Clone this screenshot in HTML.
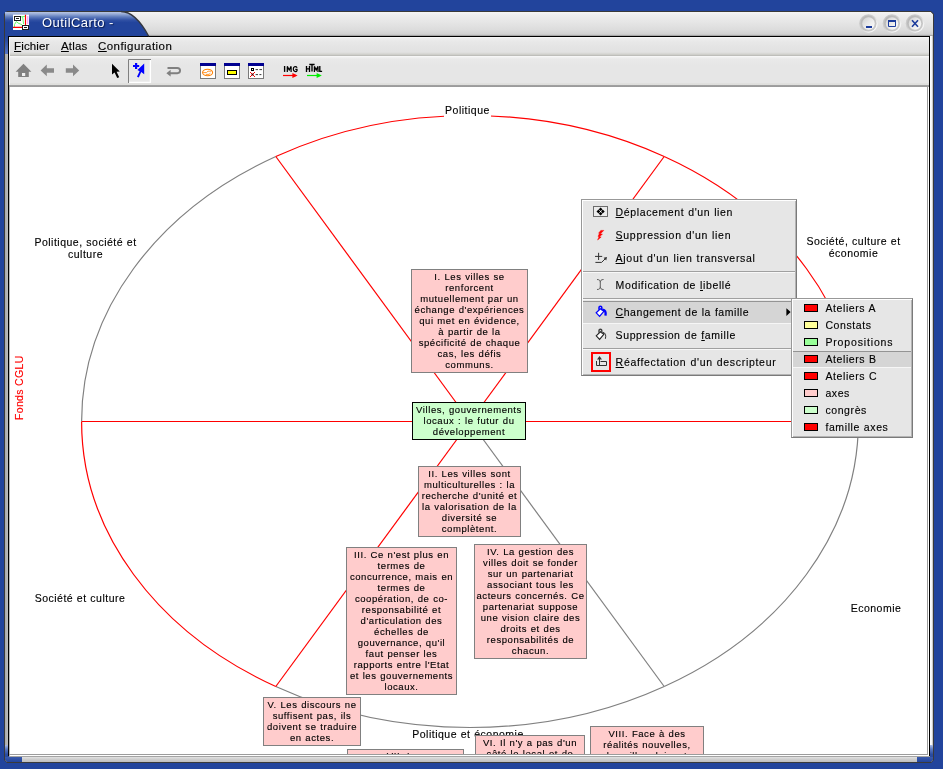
<!DOCTYPE html>
<html>
<head>
<meta charset="utf-8">
<title>OutilCarto</title>
<style>
*{box-sizing:border-box;margin:0;padding:0}
html,body{width:943px;height:769px;overflow:hidden}
body{background:#22449c;font-family:"Liberation Sans",sans-serif;position:relative;color:#000}
.abs{position:absolute}
.bx,.lb,.mi,.si,#menubar span{-webkit-text-stroke:.13px}
/* window frame */
#win{position:absolute;left:4px;top:11px;width:930px;height:752px;background:#3a3a3a;
 clip-path:polygon(3px 0,927px 0,930px 3px,930px 749px,927px 752px,3px 752px,0 749px,0 3px)}
#wininner{position:absolute;left:1px;top:1px;width:928px;height:750px;background:#e4e4e4;
 clip-path:polygon(2.5px 0,925.5px 0,928px 2.5px,928px 747.5px,925.5px 750px,2.5px 750px,0 747.5px,0 2.5px)}
#titlebar{position:absolute;left:0;top:0;width:928px;height:24px;background:linear-gradient(#f6f6f6 0,#eeeeee 3px,#e6e6e6 10px,#dcdcdc 18px,#d2d2d2 22px,#c4c4c4 23px,#8a8a8a 24px)}
#lband{position:absolute;left:0;top:24px;width:4px;height:726px;background:linear-gradient(90deg,#a8a8a8,#c6c6c6)}
#rband{position:absolute;left:925px;top:24px;width:3px;height:726px;background:linear-gradient(90deg,#ffffff 0,#fcfcfc 45%,#b4b4b4 100%)}
#bband{position:absolute;left:0;top:744px;width:928px;height:6px;background:linear-gradient(#a4a4a4 0,#a4a4a4 1px,#e2e2e2 1px,#d0d0d0 3px,#bebebe 6px)}
#black{position:absolute;left:3px;top:24px;width:922px;height:720px;background:#000}
#menubar{position:absolute;left:9px;top:37px;width:920px;height:19px;background:linear-gradient(#fbfbfb 0,#f0f0f0 1px,#e9e9e9 4px,#e5e5e5 9px,#e2e2e2 15px,#dcdcda 16px,#cfcfcb 17.5px,#b6b6b2 19px);box-shadow:inset 1px 0 0 #f8f8f8}
#menubar span{position:absolute;top:2px;font-size:11.5px;line-height:15px;white-space:pre;letter-spacing:.15px}
#toolbar{position:absolute;left:9px;top:56px;width:920px;height:31px;background:linear-gradient(#fafafa 0,#f2f2f2 1px,#e9e9e9 3px,#e6e6e6 9px,#e6e6e6 26.5px,#e0e0de 27.5px,#dededc 29px,#a2a2a2 29px,#999999 31px)}
#toolbar:before{content:"";position:absolute;left:0;top:0;width:1px;height:29px;background:#f6f6f6}
u{text-decoration:underline;text-decoration-thickness:1px;text-underline-offset:1px}
#canvasbg{position:absolute;left:9px;top:87px;width:920px;height:669px;background:#fff;box-shadow:inset 1px 0 0 #b8b8b8}
#cv{position:absolute;left:0;top:0;width:943px;height:769px;clip-path:inset(87px 16px 15px 10px)}
.bx{position:absolute;background:#ffcccc;border:1px solid #808080;font-size:9.5px;line-height:11px;text-align:center;letter-spacing:.57px;word-spacing:.5px;white-space:pre;overflow:hidden;padding-top:1px}
.lb{position:absolute;font-size:10.5px;line-height:12px;text-align:center;white-space:pre;background:#fff;letter-spacing:.5px;word-spacing:.3px}
.menu{position:absolute;background:#e6e6e6;border:1px solid;border-color:#989898 #7a7a7a #7a7a7a #989898;box-shadow:inset 1px 1px 0 #fff, inset -1px -1px 0 #b4b4b4}
.mi{position:absolute;left:1px;right:1px;height:23px;font-size:10.5px;line-height:22px;white-space:pre;letter-spacing:.7px;word-spacing:.4px}
.mi span{position:absolute;left:32.6px;top:0}
.mi.hl,.si.hl{background:#d5d5d5;box-shadow:inset 0 1px 0 #949494, inset 0 -1px 0 #f6f6f6}
.si{position:absolute;left:1px;right:1px;height:17px;font-size:10.5px;line-height:16px;white-space:pre;letter-spacing:.6px;word-spacing:.4px}
.si span{position:absolute;left:32.4px;top:0}
.si i{position:absolute;left:10.6px;top:4px;width:14px;height:8px;border:1px solid #000;background:#ff0000}
.sep{position:absolute;left:1px;right:1px;height:2px;border-top:1px solid #a0a0a0;border-bottom:1px solid #f8f8f8}
.sw{position:absolute;left:11px;width:15px;height:9px;border:1px solid #000}
</style>
</head>
<body>
<div id="root" style="position:absolute;left:0;top:0;width:943px;height:769px;will-change:transform">
<div id="win"><div id="wininner">
  <div id="titlebar"></div>
  <div id="lband"></div><div id="rband"></div><div id="bband"></div>
  <div class="abs" style="left:0;top:24px;width:4px;height:18px;background:linear-gradient(#22449c 0,#2a4ca2 25%,#5676c6 100%)"></div>
  <div class="abs" style="left:0;top:733px;width:4px;height:17px;background:linear-gradient(#a8bae4 0,#5a78c0 25%,#2a4ca2 55%,#22449c 100%)"></div>
  <div class="abs" style="left:925px;top:733px;width:3px;height:17px;background:linear-gradient(#a8bae4 0,#5a78c0 25%,#2a4ca2 55%,#22449c 100%)"></div>
  <div class="abs" style="left:0;top:745px;width:17px;height:5px;background:linear-gradient(#3a5aac,#22449c)"></div>
  <div class="abs" style="left:912px;top:745px;width:16px;height:5px;background:linear-gradient(#3a5aac,#22449c)"></div>
  <div id="black"></div>
</div></div>


<!-- title bar decorations (page coords) -->
<svg class="abs" style="left:0;top:0" width="943" height="40" viewBox="0 0 943 40">
 <defs>
  <linearGradient id="tabg" x1="0" y1="0" x2="0" y2="1">
   <stop offset="0" stop-color="#b8c6e4"/><stop offset="0.08" stop-color="#9aaed8"/><stop offset="0.2" stop-color="#607dbd"/><stop offset="0.33" stop-color="#3252a5"/><stop offset="0.44" stop-color="#22449c"/><stop offset="1" stop-color="#22449c"/>
  </linearGradient>
  <radialGradient id="ring" cx="0.5" cy="0.5" r="0.5">
   <stop offset="0.62" stop-color="#bcbcbc"/><stop offset="0.8" stop-color="#c8c8c8"/><stop offset="1" stop-color="#dedede"/>
  </radialGradient>
  <linearGradient id="btn" x1="0" y1="0" x2="1" y2="1">
   <stop offset="0" stop-color="#d0d0d0"/><stop offset="0.45" stop-color="#e8e8e8"/><stop offset="1" stop-color="#ffffff"/>
  </linearGradient>
  <linearGradient id="ring2" x1="0" y1="0" x2="1" y2="1"><stop offset="0" stop-color="#b4b4b4"/><stop offset="1" stop-color="#cccccc"/></linearGradient>
  <linearGradient id="ringl" x1="0" y1="0" x2="1" y2="1">
   <stop offset="0" stop-color="#c0c0c0"/><stop offset="0.45" stop-color="#d0d0d0"/><stop offset="0.75" stop-color="#f4f4f4"/><stop offset="1" stop-color="#ffffff"/>
  </linearGradient>
 </defs>
 <path d="M5 12H122C131 11.8 140 20 148.4 36H5Z" fill="url(#tabg)"/>
 <path d="M121 11.5C131 11.5 140 20 148.7 36.2" fill="none" stroke="#33373f" stroke-width="1.3"/>
 <!-- window buttons -->
 <g id="wb">
  <circle cx="868.5" cy="23.5" r="9.3" fill="url(#ringl)"/><circle cx="868.5" cy="23.5" r="8" fill="url(#ring2)"/><circle cx="868.5" cy="23.5" r="6.2" fill="url(#btn)"/>
  <circle cx="892" cy="23.5" r="9.3" fill="url(#ringl)"/><circle cx="892" cy="23.5" r="8" fill="url(#ring2)"/><circle cx="892" cy="23.5" r="6.2" fill="url(#btn)"/>
  <circle cx="915" cy="23.5" r="9.3" fill="url(#ringl)"/><circle cx="915" cy="23.5" r="8" fill="url(#ring2)"/><circle cx="915" cy="23.5" r="6.2" fill="url(#btn)"/>
  <rect x="866" y="26" width="6" height="2" fill="#1c3c9c"/>
  <path d="M888.5 21V26.5H895.5V21Z" fill="none" stroke="#1c3c9c" stroke-width="1"/><rect x="888" y="20" width="8" height="2" fill="#1c3c9c"/>
  <path d="M912 20.3L918 26.7M918 20.3L912 26.7" stroke="#1c3c9c" stroke-width="1.6" fill="none"/>
 </g>
 <!-- app icon -->
 <g id="appicon">
  <rect x="13" y="14.6" width="16" height="15.4" fill="#fff"/>
  <path d="M14.5 27V24.5L16.4 21.5L18 23L22 24.8M21.2 16.8L24.9 16.4M22.6 16.8L23.6 24" stroke="#66ff66" stroke-width="1" fill="none"/>
  <path d="M27.7 16V24" stroke="#ffa0ff" stroke-width="1.3" fill="none"/>
  <path d="M25.5 14.7V25.4M13 27.4H22.4" stroke="#ff0000" stroke-width="1.15" fill="none"/>
  <rect x="14.5" y="16.5" width="6" height="4" fill="#fff" stroke="#1c1c1c" stroke-width="1" shape-rendering="crispEdges"/><path d="M16 18.5H19" stroke="#1c1c1c" stroke-width="1" shape-rendering="crispEdges"/>
  <rect x="22.5" y="25.5" width="6" height="4" fill="#fff" stroke="#1c1c1c" stroke-width="1" shape-rendering="crispEdges"/><path d="M24 27.5H27" stroke="#1c1c1c" stroke-width="1" shape-rendering="crispEdges"/>
 </g>
</svg>
<div class="abs" style="left:42px;top:15px;font-size:13px;line-height:16px;color:#fff;letter-spacing:.45px;white-space:pre;text-shadow:1px 1px 1px #0a1c50">OutilCarto -</div>
<div id="menubar"><span style="left:5px"><u>F</u>ichier</span><span style="left:52px"><u>A</u>tlas</span><span style="left:89px;letter-spacing:.45px"><u>C</u>onfiguration</span></div>
<div id="toolbar"></div>
<svg class="abs" style="left:0;top:56px" width="943" height="30" viewBox="0 56 943 30">
 <!-- home -->
 <path d="M23.5 63.8L31.4 71.8H28.8V77H18.2V71.8H15.6Z" fill="#808080"/><rect x="22" y="73" width="3.2" height="3" fill="#f0f0f0"/>
 <!-- back / forward -->
 <path d="M40.6 70.4L46.8 64.6V68.2H54V72.8H46.8V76.2Z" fill="#8a8a8a"/>
 <path d="M79.2 70.4L73 64.6V68.2H65.8V72.8H73V76.2Z" fill="#8a8a8a"/>
 <!-- cursor -->
 <path d="M112 63.8V74.6L114.6 72.4L117.2 78L119.2 77.2L116.6 71.8L119.8 71.4Z" fill="#000"/>
 <!-- selected tool button -->
 <rect x="128" y="59" width="23" height="24" fill="#e8e8e8"/>
 <path d="M128.5 83V59.5H151" fill="none" stroke="#808080" stroke-width="1"/>
 <path d="M129 82.4H150.4V60" fill="none" stroke="#ffffff" stroke-width="1.3"/>
 <path d="M133 66H139.2M136.1 62.9V69.1" stroke="#0000ff" stroke-width="2.2" fill="none"/>
 <path d="M144.2 63.6V74.2L141.2 72L138.8 77.6L137 76.8L139.6 71.2L137.4 70Z" fill="#0000ff"/>
 <!-- return arrow -->
 <path d="M167.5 68H177.3C181 68 181 73.2 177.3 73.2H170" fill="none" stroke="#808080" stroke-width="1.9"/>
 <path d="M166.4 73.2L170.6 69.8V76.6Z" fill="#808080"/>
 <!-- window icons -->
 <g id="wi1"><rect x="200.5" y="63.5" width="15" height="15" fill="#fff" stroke="#7a7a7a"/><rect x="200" y="63" width="16" height="3" fill="#000090"/>
  <ellipse cx="207.6" cy="72.5" rx="5" ry="3.3" fill="none" stroke="#ff8000" stroke-width="1.1"/><path d="M203.2 72.6H206.4L208 71.2H211.4M205.8 74.4H209L210.4 73.2" fill="none" stroke="#ff8000" stroke-width="0.8"/></g>
 <g id="wi2"><rect x="224.5" y="63.5" width="15" height="15" fill="#fff" stroke="#7a7a7a"/><rect x="224" y="63" width="16" height="3" fill="#000090"/>
  <rect x="227.5" y="70.5" width="9" height="4" fill="#ffff00" stroke="#000"/></g>
 <g id="wi3"><rect x="248.5" y="63.5" width="15" height="15" fill="#fff" stroke="#7a7a7a"/><rect x="248" y="63" width="16" height="3" fill="#000090"/>
  <rect x="251" y="68" width="3" height="3" fill="#000" shape-rendering="crispEdges"/><rect x="252" y="69" width="1" height="1" fill="#fff" shape-rendering="crispEdges"/>
  <path d="M255.6 69.6H258M259.4 69.6H262M255.6 74.6H258M259.4 74.6H261.4" stroke="#222" stroke-width="0.9"/>
  <path d="M250 72L255 77M255 72L250 77" stroke="#ff0000" stroke-width="1"/><rect x="251.6" y="73.6" width="1.8" height="1.8" fill="#400000"/></g>
 <!-- IMG / HTML -->
 <g fill="none" stroke="#000" stroke-width="1.35">
  <path d="M284.6 66V71.9"/>
  <path d="M287.3 71.9V66.4L289.2 70L291.1 66.4V71.9" stroke-width="1.25"/>
  <path d="M297.1 67.7C296.3 66.3 293.3 66 293.3 69C293.3 72 296.4 71.9 297 70.7V69.4H295.3" stroke-width="1.25"/>
  <path d="M306.5 66V71.9M309.5 66V71.9M306.5 68.8H309.5"/>
  <path d="M309.3 64.5H314.6M312 64.5V71.6"/>
  <path d="M314.4 71.9V66.4L316.2 70L318 66.4V71.9" stroke-width="1.25"/>
  <path d="M319.8 66V71.3H322.1"/>
 </g>
 <path d="M283 75.5H296" stroke="#ff0000" stroke-width="1.2"/><path d="M297.6 75.5L292.4 73V78Z" fill="#ff0000"/>
 <path d="M307 75.5H320" stroke="#00ee00" stroke-width="1.2"/><path d="M321.8 75.5L316.6 73V78Z" fill="#00ee00"/>
</svg>
<div id="canvasbg"></div>
<div class="abs" style="left:9px;top:754px;width:919px;height:1px;background:#9c9c9c"></div><div class="abs" style="left:927px;top:87px;width:1px;height:668px;background:#9c9c9c"></div>

<div id="cv">
<svg class="abs" style="left:0;top:0" width="943" height="769" viewBox="0 0 943 769" fill="none" stroke-width="1.2">
 <g id="lines">
  <path d="M858.40 421.50A388.4 306 0 0 1 664.20 686.50" stroke="#808080"/>
  <path d="M664.20 686.50A388.4 306 0 0 1 275.80 686.50" stroke="#808080"/>
  <path d="M275.80 686.50A388.4 306 0 0 1 81.60 421.50" stroke="#ff0000"/>
  <path d="M81.60 421.50A388.4 306 0 0 1 275.80 156.50" stroke="#808080"/>
  <path d="M275.80 156.50A388.4 306 0 0 1 664.20 156.50" stroke="#ff0000"/>
  <path d="M664.20 156.50A388.4 306 0 0 1 858.40 421.50" stroke="#ff0000"/>
  <path d="M470.0 421.5L858.40 421.50" stroke="#ff0000"/>
  <path d="M470.0 421.5L664.20 686.50" stroke="#808080"/>
  <path d="M470.0 421.5L275.80 686.50" stroke="#ff0000"/>
  <path d="M470.0 421.5L81.60 421.50" stroke="#ff0000"/>
  <path d="M470.0 421.5L275.80 156.50" stroke="#ff0000"/>
  <path d="M470.0 421.5L664.20 156.50" stroke="#ff0000"/>
 </g>
</svg>

<div class="lb" style="left:444px;top:104px;width:47px;height:14px;padding-top:.4px">Politique</div>
<div class="lb" style="left:33px;top:236px;width:105px">Politique, société et
culture</div>
<div class="lb" style="left:804px;top:235px;width:99px">Société, culture et
économie</div>
<div class="lb" style="left:30px;top:592px;width:100px">Société et culture</div>
<div class="lb" style="left:846px;top:602px;width:60px">Economie</div>
<div class="lb" style="left:408px;top:728px;width:120px">Politique et économie</div>
<div class="lb" style="left:13px;top:420px;width:66px;color:#ff0000;transform-origin:0 0;transform:rotate(-90deg);letter-spacing:.33px;word-spacing:0;background:none;text-align:left">Fonds CGLU</div>

<div class="bx" style="left:411px;top:269px;width:117px;height:104px">I. Les villes se
renforcent
mutuellement par un
échange d'expériences
qui met en évidence,
à partir de la
spécificité de chaque
cas, les défis
communs.</div>
<div class="bx" style="left:412px;top:402px;width:114px;height:38px;background:#ccffcc;border-color:#000">Villes, gouvernements
locaux : le futur du
développement</div>
<div class="bx" style="left:418px;top:466px;width:103px;height:71px">II. Les villes sont
multiculturelles : la
recherche d'unité et
la valorisation de la
diversité se
complètent.</div>
<div class="bx" style="left:346px;top:547px;width:111px;height:148px">III. Ce n'est plus en
termes de
concurrence, mais en
termes de
coopération, de co-
responsabilité et
d'articulation des
échelles de
gouvernance, qu'il
faut penser les
rapports entre l'Etat
et les gouvernements
locaux.</div>
<div class="bx" style="left:474px;top:544px;width:113px;height:115px">IV. La gestion des
villes doit se fonder
sur un partenariat
associant tous les
acteurs concernés. Ce
partenariat suppose
une vision claire des
droits et des
responsabilités de
chacun.</div>
<div class="bx" style="left:263px;top:697px;width:98px;height:49px">V. Les discours ne
suffisent pas, ils
doivent se traduire
en actes.</div>
<div class="bx" style="left:347px;top:749px;width:117px;height:40px;padding-top:0">VII. Les
villes</div>
<div class="bx" style="left:475px;top:735px;width:110px;height:60px">VI. Il n'y a pas d'un
côté le local et de
l'autre le global</div>
<div class="bx" style="left:590px;top:726px;width:114px;height:60px">VIII. Face à des
réalités nouvelles,
les villes doivent
s'adapter</div>
</div>


<!-- popup menu -->
<div class="menu" style="left:581px;top:199px;width:216px;height:177px">
 <div class="mi" style="top:1px"><span style="letter-spacing:.62px"><u>D</u>éplacement d'un lien</span></div>
 <div class="mi" style="top:24px"><span><u>S</u>uppression d'un lien</span></div>
 <div class="mi" style="top:47px"><span><u>A</u>jout d'un lien transversal</span></div>
 <div class="sep" style="top:71px"></div>
 <div class="mi" style="top:74px"><span style="letter-spacing:.63px">Modification de <u>l</u>ibellé</span></div>
 <div class="sep" style="top:98px"></div>
 <div class="mi hl" style="top:101px"><span style="letter-spacing:.55px"><u>C</u>hangement de la famille</span></div>
 <div class="mi" style="top:124px"><span style="letter-spacing:.6px">Suppression de <u>f</u>amille</span></div>
 <div class="sep" style="top:148px"></div>
 <div class="mi" style="top:151px"><span><u>R</u>éaffectation d'un descripteur</span></div>
 <svg class="abs" style="left:-1px;top:-1px" width="216" height="177" viewBox="581 199 216 177">
  <!-- move icon -->
  <rect x="593.5" y="206.5" width="14" height="10" fill="#ececec" stroke="#6c6c6c"/>
  <path d="M600.6 207.4L604.7 211.5L600.6 215.6L596.5 211.5Z" fill="#000"/><path d="M598.4 209.3L602.8 213.7M602.8 209.3L598.4 213.7" stroke="#e8e8e8" stroke-width="0.7"/><rect x="600" y="210.9" width="1.2" height="1.2" fill="#fff"/>
  <!-- lightning -->
  <path d="M603.8 230.4L600.2 234H602.4L599.4 237H601.2L597.6 240L599.2 236.4H598L599.6 233.2H598.6L600.8 230.4Z" fill="#ff0000" stroke="#ff0000" stroke-width="0.5"/>
  <!-- add transversal -->
  <path d="M595 256.4H602.2M598.6 252.8V260" stroke="#303030" stroke-width="1" fill="none"/>
  <path d="M595.4 262.4H601.6L606 258" stroke="#303030" stroke-width="1" fill="none"/><path d="M607 257L603.6 257.8L606.2 260.4Z" fill="#303030"/>
  <!-- I-beam -->
  <path d="M597 279.5C599.5 279.5 600.3 280.5 600.3 282.5V286.5C600.3 288.5 599.5 289.5 597 289.5M603.6 279.5C601.1 279.5 600.3 280.5 600.3 282.5M600.3 286.5C600.3 288.5 601.1 289.5 603.6 289.5" stroke="#505050" stroke-width="0.9" fill="none"/>
  <!-- bucket blue -->
  <g id="bk1"><path d="M596.2 312.8L600.4 308.8L604 311.2L599.6 316.4Z" fill="#fff" stroke="#0000ff" stroke-width="1.2"/>
   <path d="M599 309.8V307.6C599 305.8 601.8 305.8 601.8 307.6V310.2" fill="none" stroke="#0000ff" stroke-width="1.5"/>
   <path d="M602.6 309.6C605.2 309.8 606 311.8 605.5 315.6" fill="none" stroke="#0000ff" stroke-width="2.3"/></g>
  <!-- bucket gray -->
  <g id="bk2"><path d="M596.2 335.8L600.4 331.8L604 334.2L599.6 339.4Z" fill="#fff" stroke="#202020" stroke-width="1.1"/>
   <path d="M599 332.8V330.6C599 328.8 601.8 328.8 601.8 330.6V333.2" fill="none" stroke="#404040" stroke-width="1.4"/>
   <path d="M603 332.4C605.6 333 606.2 335 605.4 338.8" fill="none" stroke="#303030" stroke-width="1"/></g>
  <!-- reassign -->
  <rect x="592" y="353" width="18" height="18" fill="none" stroke="#ff0000" stroke-width="2"/>
  <path d="M596.5 361V365.5H606.5V361.5H600.5" fill="none" stroke="#303030" stroke-width="1"/>
  <path d="M599.5 365V358" stroke="#303030" stroke-width="1" fill="none"/><path d="M599.5 356L597 359.4H602Z" fill="#303030"/>
  <!-- submenu arrow -->
  <path d="M786.4 308.2V316L790.6 312.1Z" fill="#000"/>
 </svg>
</div>
<!-- submenu -->
<div class="menu" style="left:791px;top:298px;width:122px;height:140px">
 <div class="si" style="top:1px"><i></i><span>Ateliers A</span></div>
 <div class="si" style="top:18px"><i style="background:#ffff99"></i><span>Constats</span></div>
 <div class="si" style="top:35px"><i style="background:#99ff99"></i><span style="letter-spacing:.85px">Propositions</span></div>
 <div class="si hl" style="top:52px"><i></i><span>Ateliers B</span></div>
 <div class="si" style="top:69px"><i></i><span>Ateliers C</span></div>
 <div class="si" style="top:86px"><i style="background:#ffcccc"></i><span>axes</span></div>
 <div class="si" style="top:103px"><i style="background:#ccffcc"></i><span>congrès</span></div>
 <div class="si" style="top:120px"><i></i><span>famille axes</span></div>
</div>
</div>
</body>
</html>
